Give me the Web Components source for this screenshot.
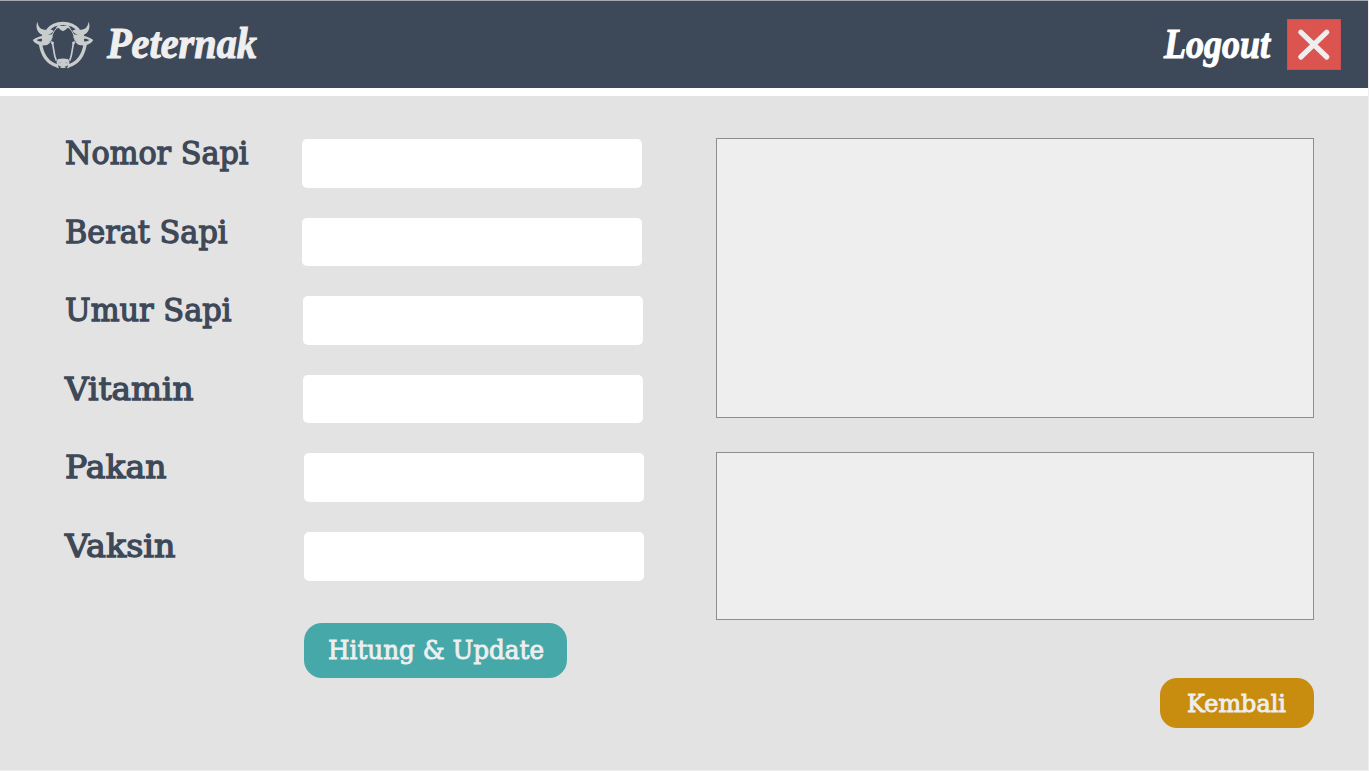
<!DOCTYPE html>
<html lang="id">
<head>
<meta charset="utf-8">
<title>Peternak</title>
<style>html,body{margin:0;height:100%;overflow:hidden}</style>
</head>
<body>
<peternak-app></peternak-app>
<script>
class BaseElement extends HTMLElement {
  constructor() { super(); this.attachShadow({ mode: 'open' }); }
  connectedCallback() { this.shadowRoot.innerHTML = this.render(); }
  attr(name, fallback = '') { return this.getAttribute(name) ?? fallback; }
}

/* One line of text fitted to a given width; `base` is the baseline inside `h`. */
class FitText extends BaseElement {
  render() {
    const w = this.attr('w'), h = this.attr('h'), label = this.attr('label').replace(/&/g, '&amp;');
    return `<style>:host{display:block;width:${w}px;height:${h}px}svg{display:block;overflow:visible}
      text{font-family:inherit;font-weight:inherit;font-style:inherit;fill:currentColor;stroke:currentColor;stroke-width:var(--ink,0)}</style>
      <svg width="${w}" height="${h}"><text x="0" y="${this.attr('base')}" font-size="${this.attr('size')}" textLength="${w}" lengthAdjust="spacingAndGlyphs">${label}</text></svg>`;
  }
}
customElements.define('fit-text', FitText);

class CowLogo extends BaseElement {
  render() {
    return `<style>:host{display:block;width:80px;height:66px}svg{display:block}</style>
    <svg width="80" height="66" viewBox="0 0 240 198" fill="#c9cccd">
      <g fill="none" stroke="#c9cccd">
        <path d="M71 55C82 40 98 34 117 34s35 6 47 21" stroke-width="10"/>
        <path d="M49 93C54 130 72 154 101 162M184 93C179 130 161 154 132 162" stroke-width="10"/>
        <path d="M84 91C91 108 87 122 97 146M150 91C143 108 147 122 137 146" stroke-width="5"/>
        <path d="M97 50C89 57 83 68 84 79M137 50C145 57 151 68 150 79" stroke-width="3"/>
      </g>
      <path d="M40 29C34 45 39 63 57 69C70 72 82 66 89 56C79 49 70 54 62 53C50 52 43 45 40 29ZM194 29C200 45 195 63 177 69C164 72 152 66 145 56C155 49 164 54 172 53C184 52 191 45 194 29Z"/>
      <path d="M54 65C64 71 77 68 85 67L83 84C76 92 63 95 54 89ZM180 65C170 71 157 68 149 67L151 84C158 92 171 95 180 89Z"/>
      <path fill-rule="evenodd" d="M62 71C48 71 37 76 26 84C35 99 54 104 71 98L84 87C74 91 65 91 58 86C50 90 42 88 38 84C45 80 54 79 62 81ZM172 71C186 71 197 76 208 84C199 99 180 104 163 98L150 87C160 91 169 91 176 86C184 90 192 88 196 84C189 80 180 79 172 81Z"/>
      <path d="M94 50L103 38C112 43 122 43 131 38L141 50L129 48C127 54 121 54 117 58C113 54 107 54 105 48Z"/>
      <path d="M82 87l8 4-2 8-7-6ZM152 87l-8 4 2 8 7-6Z"/>
      <path d="M103 141Q117 138 131 141Q139 147 135 157Q129 165 117 166Q105 165 99 157Q95 147 103 141Z"/>
      <path d="M94 157Q94 168 105 169L101 158ZM140 157Q140 168 129 169L133 158ZM108 168h18l-4-4h-10Z"/>
      <g fill="#a2a9af"><ellipse cx="107" cy="152" rx="3.5" ry="2"/><ellipse cx="127" cy="152" rx="3.5" ry="2"/></g>
    </svg>`;
  }
}
customElements.define('cow-logo', CowLogo);

class CloseButton extends BaseElement {
  render() {
    return `<style>:host{display:block}button{display:block;box-sizing:border-box;width:54px;height:51px;padding:0;border:1px solid #c9514f;background:#db544f}svg{display:block}</style>
    <button aria-label="Logout"><svg width="52" height="49"><path d="M12.8 12.2L38.8 37M38.8 12.2L12.8 37" stroke="#eee" stroke-width="5.2" stroke-linecap="round"/></svg></button>`;
  }
}
customElements.define('close-button', CloseButton);

class AppHeader extends BaseElement {
  render() {
    return `<style>
      :host{display:flex;align-items:flex-start;box-sizing:border-box;height:96px;padding:0 27px 0 24px;border-bottom:8px solid #fff;
        background:linear-gradient(#a5aab0 0 1px,#3d4858 1px);color:#efefef;font:italic bold 16px "Liberation Serif",serif;--ink:1.1px}
      cow-logo{margin-top:12px}
      .brand{margin:20px 0 0 2.5px}
      .logout{margin:20px 17px 0 auto;color:#fff}
      close-button{margin-top:19px}
    </style>
    <cow-logo></cow-logo>
    <fit-text class="brand" label="Peternak" w="150" h="50" base="37.5" size="45"></fit-text>
    <fit-text class="logout" label="Logout" w="106" h="50" base="38" size="43"></fit-text>
    <close-button></close-button>`;
  }
}
customElements.define('app-header', AppHeader);

class FormField extends BaseElement {
  render() {
    return `<style>
      :host{display:flex;height:48.6px;align-items:flex-start}
      .label{width:calc(237px + var(--shift,0px));flex:none;color:#3d4858}
      input{display:block;box-sizing:border-box;width:339.6px;height:48.6px;border:0;border-radius:5px;background:#fff;padding:0 12px;outline:0;font:20px "DejaVu Serif",serif}
    </style>
    <div class="label"><fit-text label="${this.attr('label')}" w="${this.attr('w')}" h="40" base="24.6" size="31.5"></fit-text></div>
    <input aria-label="${this.attr('label')}">`;
  }
}
customElements.define('form-field', FormField);

class PillButton extends BaseElement {
  render() {
    return `<style>:host{display:block}button{display:flex;justify-content:center;align-items:center;width:100%;height:100%;margin:0;padding:0;border:0;border-radius:var(--radius);background:var(--fill);color:#eee;font:inherit}</style>
    <button><slot></slot></button>`;
  }
}
customElements.define('pill-button', PillButton);

class ResultPanel extends BaseElement {
  render() {
    return `<style>:host{display:block;box-sizing:border-box;border:1px solid #8e8e8e;background:#eee}</style><slot></slot>`;
  }
}
customElements.define('result-panel', ResultPanel);

class PeternakApp extends BaseElement {
  render() {
    const fields = [['Nomor Sapi', 183.5], ['Berat Sapi', 162.5], ['Umur Sapi', 166.5], ['Vitamin', 128.5], ['Pakan', 101.5], ['Vaksin', 110.5]];
    return `<style>
      :host{display:flex;flex-direction:column;width:1369px;height:771px;box-sizing:border-box;border-right:1px solid #efefef;border-bottom:1px solid #efefef;background:#e3e3e3;
        font-family:"DejaVu Serif",serif;--ink:1.3px}
      main{display:grid;grid-template-columns:580px 598px;column-gap:71.4px;padding:43px 0 0 65px}
      form{display:flex;flex-direction:column;gap:30px}
      .save{width:262.5px;height:54.5px;margin:12.6px 0 0 239.4px;--radius:18px;--fill:#46a8a8;--ink:.9px}
      aside{display:flex;flex-direction:column;margin-top:-1px}
      .main{height:280px}
      .side{height:168px;margin-top:34px}
      .back{align-self:flex-end;width:154.5px;height:50px;margin:58.4px .4px 0 0;--radius:17px;--fill:#c88c0f;--ink:.9px}
    </style>
    <app-header></app-header>
    <main>
      <form onsubmit="return false">
        ${fields.map(([t, w], i) => `<form-field label="${t}" w="${w}" style="--shift:${i * 0.48}px"></form-field>`).join('')}
        <pill-button class="save"><fit-text label="Hitung & Update" w="216" h="32" base="25" size="25.5"></fit-text></pill-button>
      </form>
      <aside>
        <result-panel class="main"></result-panel>
        <result-panel class="side"></result-panel>
        <pill-button class="back"><fit-text label="Kembali" w="99" h="30" base="24" size="24"></fit-text></pill-button>
      </aside>
    </main>`;
  }
}
customElements.define('peternak-app', PeternakApp);
</script>
</body>
</html>
